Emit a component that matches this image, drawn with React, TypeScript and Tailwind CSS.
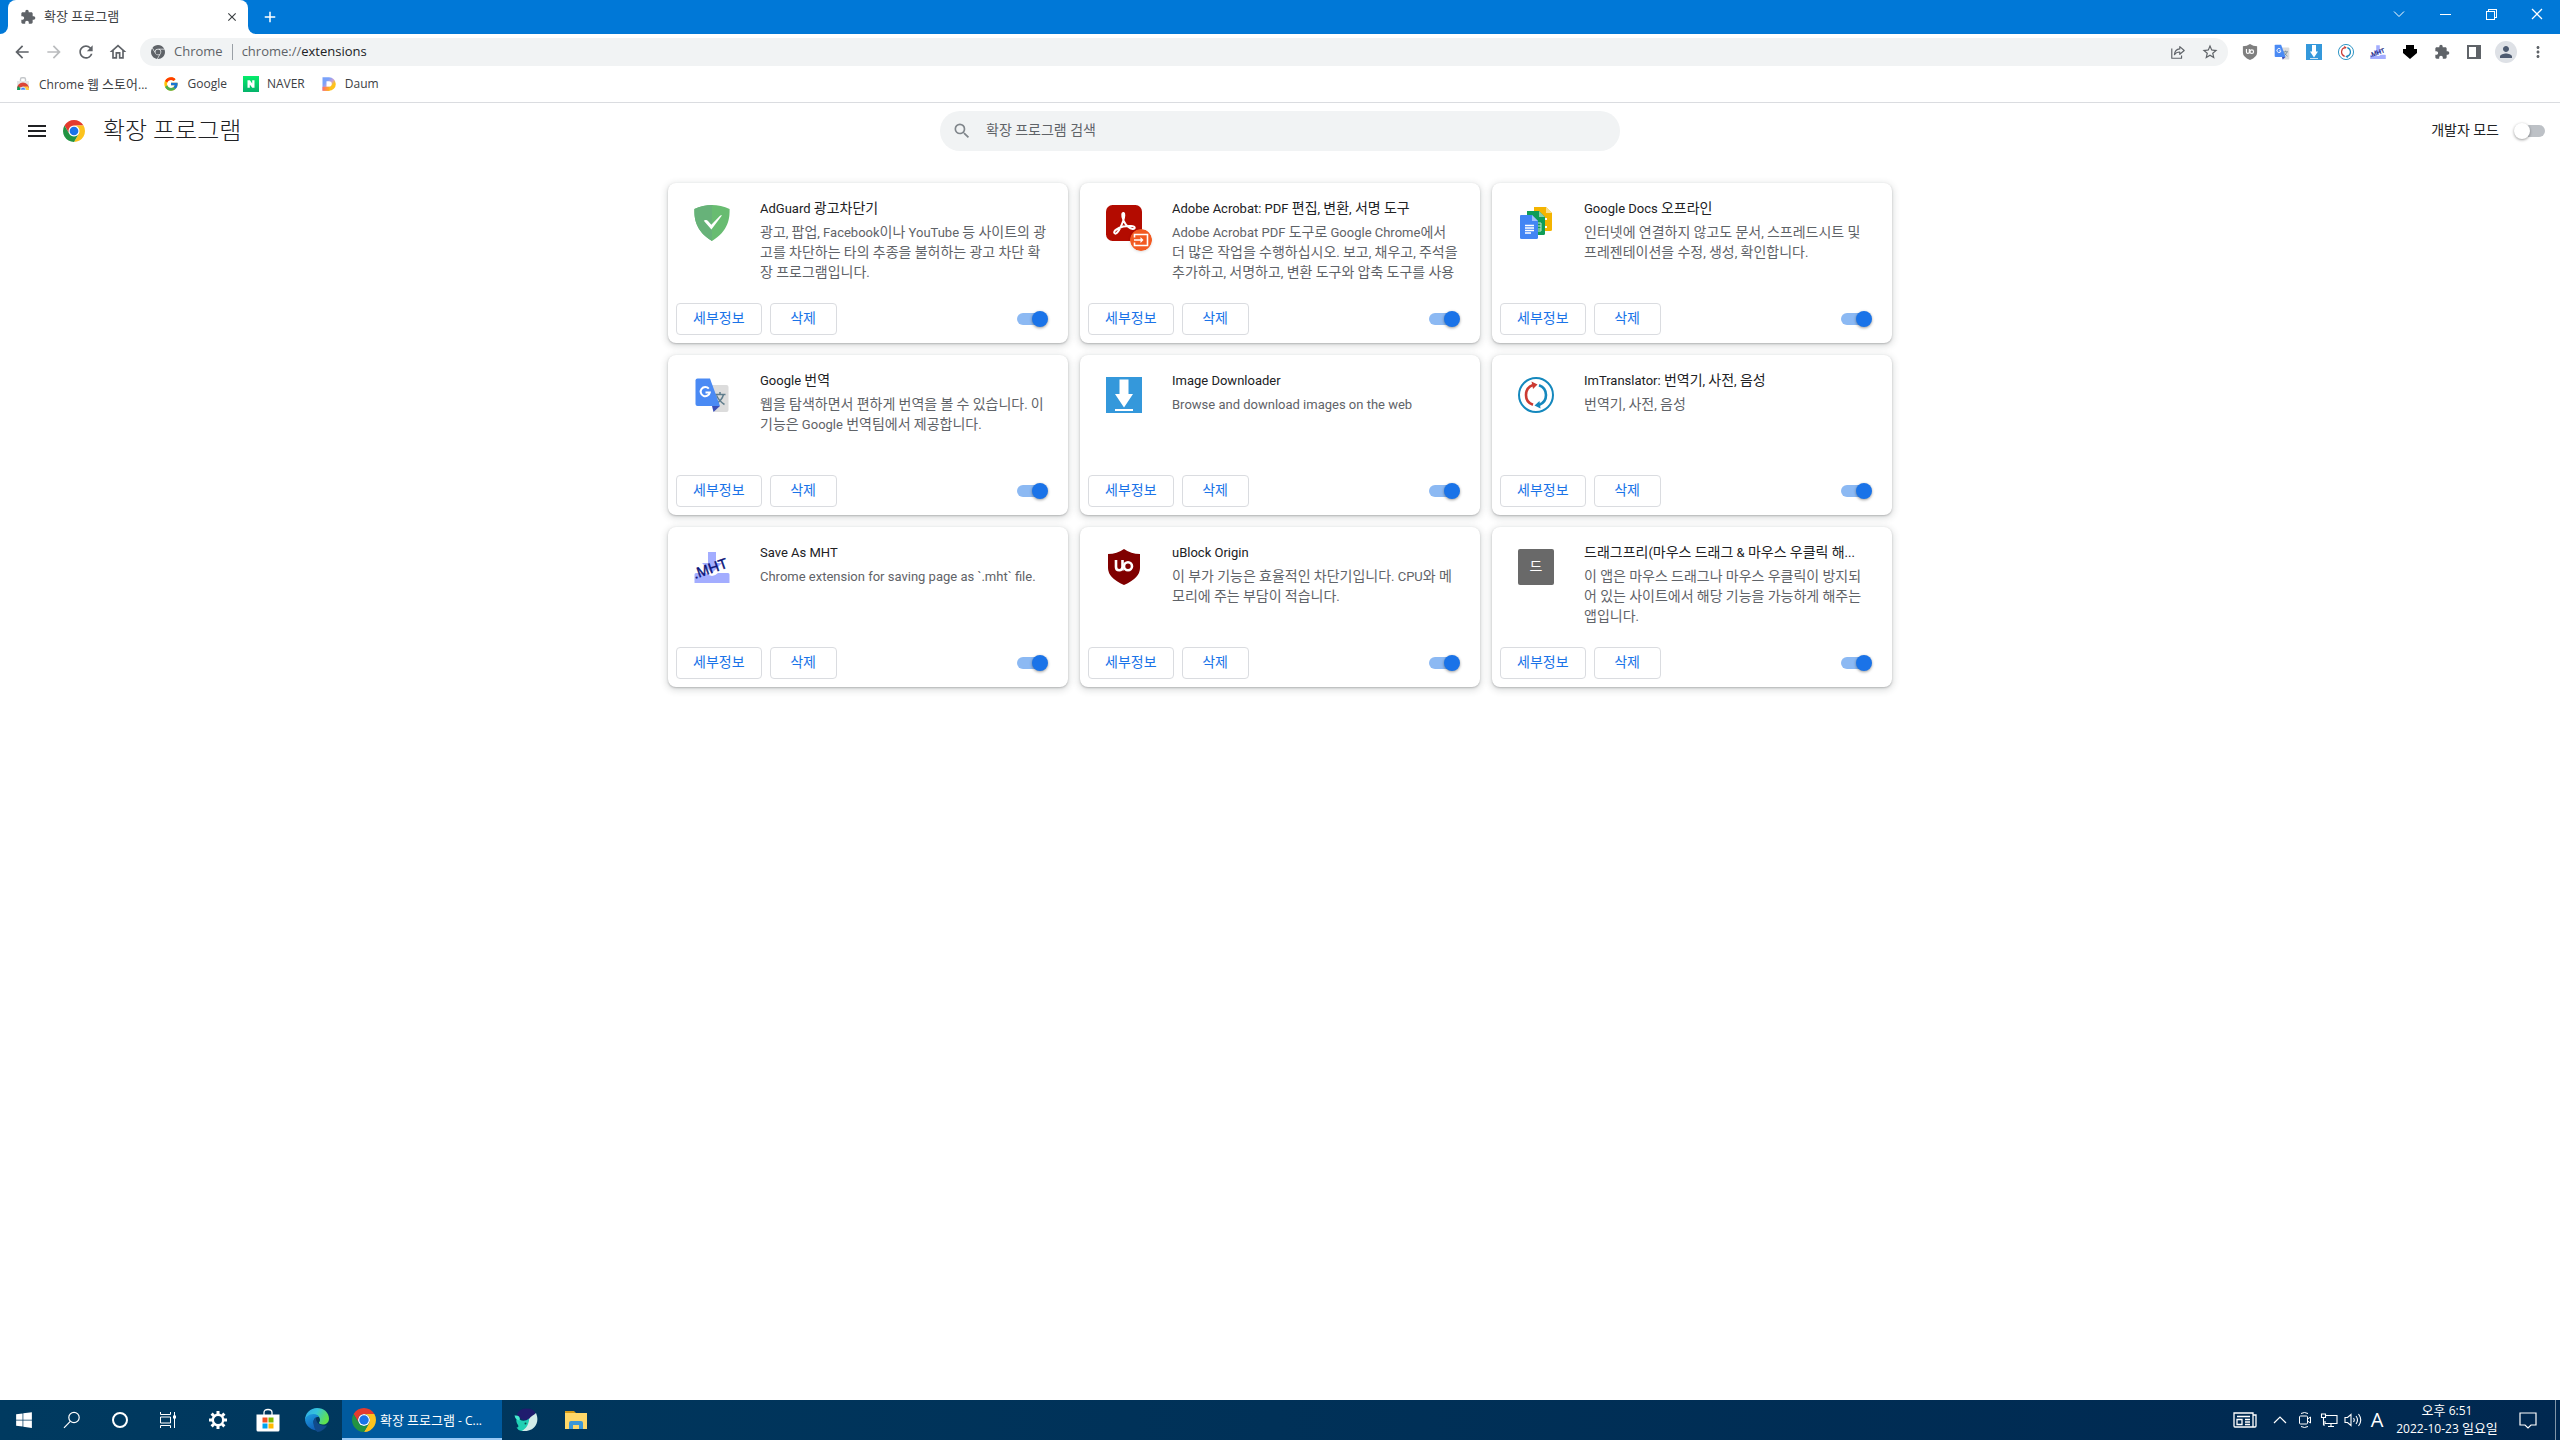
import React from "react";
import { FaWindows } from "react-icons/fa";
import { FcGoogle } from "react-icons/fc";
import {
  MdAdd,
  MdArrowBack,
  MdArrowForward,
  MdClose,
  MdExtension,
  MdMenu,
  MdMoreVert,
  MdOutlineHome,
  MdPerson,
  MdRefresh,
  MdSearch,
  MdStarBorder,
} from "react-icons/md";
import { SiGooglechrome } from "react-icons/si";
import { VscChromeClose, VscChromeMinimize, VscChromeRestore } from "react-icons/vsc";

type IconProps = { className?: string };

// Hangul is set one size up from the Latin text around it
const Mixed: React.FC<{ text: string; hangul?: string }> = ({ text, hangul = "text-[14px]" }) => (
  <>
    {text.split(/([\u3131-\uD79D]+)/).map((part, i) =>
      i % 2 ? (
        <span key={i} className={`leading-4 ${hangul}`}>
          {part}
        </span>
      ) : (
        part
      )
    )}
  </>
);

/* ---------- Logos ---------- */

const ChromeLogo: React.FC<IconProps> = ({ className }) => (
  <svg viewBox="0 0 48 48" className={className}>
    <circle cx="24" cy="24" r="12" fill="#fff" />
    <path d="M24 12H44.78a24 24 0 0 0-41.56 0L13.61 30A12 12 0 0 1 24 12Z" fill="#e33b2e" />
    <path d="M34.39 30 24 48A24 24 0 0 0 44.78 12H24A12 12 0 0 1 34.39 30Z" fill="#fcc31e" />
    <path d="M13.61 30 3.22 12A24 24 0 0 0 24 48L34.39 30a12 12 0 0 1-20.78 0Z" fill="#229342" />
    <circle cx="24" cy="24" r="9.5" fill="#1a73e8" />
  </svg>
);

const WebStoreLogo: React.FC<IconProps> = ({ className }) => (
  <svg viewBox="0 0 16 16" className={className}>
    <path d="M5.5 5V3.2Q5.500 1.800 7 1.800H9Q10.500 1.800 10.500 3.200V5" fill="none" stroke="#c4c7ca" strokeWidth="1.4" />
    <path d="M2 5h12v9H2z" fill="#e4e5e6" />
    <path d="M2 12.500A6 6 0 0 1 14 12.500L8 10.500Z" fill="#db4437" />
    <path d="M2 14a6 6 0 0 1 1.200-4L7 14Z" fill="#0f9d58" />
    <path d="M14 14a6 6 0 0 0-1-3.500H8.500V14Z" fill="#ffcd40" />
    <path d="M5.400 14a2.700 2.700 0 0 1 5.400 0Z" fill="#4285f4" stroke="#fff" strokeWidth=".6" />
  </svg>
);

const NaverLogo: React.FC<IconProps> = ({ className }) => (
  <svg viewBox="0 0 16 16" className={className}>
    <defs>
      <linearGradient id="naver" x1="0" y1="0" x2="0" y2="1">
        <stop offset="0" stopColor="#05ec6a" />
        <stop offset="1" stopColor="#05b36b" />
      </linearGradient>
    </defs>
    <path d="M0 0h16v16H0z" fill="url(#naver)" />
    <path d="M4.500 4.200h2.400l2.300 3.400V4.200h2.300v7.600H9.200L6.800 8.400v3.400H4.500z" fill="#fff" />
  </svg>
);

const DaumLogo: React.FC<IconProps> = ({ className }) => (
  <svg viewBox="0 0 16 16" className={className}>
    <defs>
      <linearGradient id="daum" x1="0" y1="0" x2="1" y2="1">
        <stop offset=".2" stopColor="#7aa2fa" />
        <stop offset=".5" stopColor="#c8a0d8" />
        <stop offset=".75" stopColor="#ffc21a" />
      </linearGradient>
      <linearGradient id="daumFoot" x1="0" y1="0" x2="1" y2="0">
        <stop offset="0" stopColor="#ff6f6f" />
        <stop offset="1" stopColor="#ffb01a" />
      </linearGradient>
    </defs>
    <path d="M3.500 3.200H8a4.800 4.800 0 0 1 0 9.600H3.500z" fill="none" stroke="url(#daum)" strokeWidth="4" />
    <path d="M1.500 10.800H8.500v4H1.500z" fill="url(#daumFoot)" />
  </svg>
);

/* ---------- Extension icons ---------- */

const AdGuardIcon: React.FC<IconProps> = ({ className }) => (
  <svg viewBox="0 0 36 36" className={className}>
    <path d="M18 0C12.500 0 5.800 1.300.4 4.100c0 6-.7 21 17.600 31.900C36.300 25.100 35.600 10.100 35.600 4.100 30.200 1.300 23.500 0 18 0Z" fill="#68bc71" />
    <path d="M18 0C12.500 0 5.800 1.300.4 4.100c0 6-.7 21 17.600 31.900Z" fill="#67b279" />
    <path d="M17.400 24.500 27.900 10.600c-.8-.6-1.500-.2-1.900.2L17.300 19.800l-3.300-3.900c-1.600-1.800-3.700-.4-4.200-.1Z" fill="#fff" />
  </svg>
);

const AcrobatIcon: React.FC<IconProps> = ({ className }) => (
  <svg viewBox="0 0 36 36" className={className}>
    <rect width="36" height="36" rx="6.500" fill="#b30b00" />
    <path
      d="M8.500 28.200c-1.700-2.100 3.300-5.400 8.800-6.600 5.400-1.300 11.200-.7 11.400 1.100.2 1.900-3.400 1.700-6.600-.9-3.600-3-6.300-8.700-5.800-12.300.3-2.400 2.200-2 2 .7-.3 5.500-6.800 21.300-9.800 18Z"
      fill="none"
      stroke="#fff"
      strokeWidth="2"
      strokeLinejoin="round"
    />
  </svg>
);

const AcrobatBadge: React.FC<IconProps> = ({ className }) => (
  <svg viewBox="0 0 22 22" className={className}>
    <circle cx="11" cy="11" r="11" fill="#f25a22" />
    <path d="M4.500 8.500V5.500h13v11h-13v-3" fill="none" stroke="#fff" strokeWidth="1.600" />
    <path d="M4 11h8" stroke="#fff" strokeWidth="1.600" />
    <path d="M10.500 8 13.500 11 10.500 14z" fill="#fff" />
  </svg>
);

const DocsIcon: React.FC<IconProps> = ({ className }) => (
  <svg viewBox="0 0 36 36" className={className}>
    <path d="M16 2h12l6 6v16.500q0 1.500-1.500 1.500H17.500Q16 26 16 24.500z" fill="#f4b400" />
    <path d="M28 2l6 6h-6z" fill="#fade8b" />
    <path d="M26 13h3v2h-3zM26 21h3v2h-3z" fill="#fff" />
    <path d="M9 6h12l6 6v16.500q0 1.500-1.500 1.500H10.500Q9 30 9 28.500z" fill="#0f9d58" />
    <path d="M21 6l6 6h-6z" fill="#87ceac" />
    <path d="M19 18h4v8h-4M19 21h4M19 24h4" fill="none" stroke="#bfe5d1" />
    <path d="M2 11q0-1 1-1h11l6 6v16.500q0 1.500-1.500 1.500h-15Q2 34 2 32.500z" fill="#4285f4" />
    <path d="M14 10l6 6h-6z" fill="#a1c2fa" />
    <path d="M7 20.500h9M7 23h9M7 25.500h9M7 28h6" stroke="#fff" strokeWidth="1.300" />
  </svg>
);

const TranslateIcon: React.FC<IconProps> = ({ className }) => (
  <svg viewBox="0 0 36 36" className={className}>
    <path d="M15 8h17.500Q34.500 8 34.500 10v23q0 2-2 2H20z" fill="#dcdcdc" />
    <path d="M20.500 17.500h11M26 15v2.500M29.500 17.500q-1.500 6-8 9.500M22.500 18.500q3 6 8 9" fill="none" stroke="#5f7d8c" strokeWidth="1.500" />
    <path d="M18 29h8l-6.500 6z" fill="#3a4fb8" />
    <path d="M3.500 1.500h12.500L26 29H3.500q-2 0-2-2V3.500q0-2 2-2z" fill="#4a8af4" />
    <path
      d="M14.800 11.700A4.600 4.600 0 1 0 15.800 15.500H11.500"
      fill="none"
      stroke="#fff"
      strokeWidth="2"
    />
  </svg>
);

const DownloaderIcon: React.FC<IconProps> = ({ className }) => (
  <svg viewBox="0 0 36 36" className={className}>
    <path d="M0 0h36v36H0z" fill="#3498db" />
    <path d="M13.500 2.500h9V17H27L18 30.500 9 17h4.500zM9 32h18v2H9z" fill="#fff" />
  </svg>
);

const ImTranslatorIcon: React.FC<IconProps> = ({ className }) => (
  <svg viewBox="0 0 36 36" className={className}>
    <circle cx="18" cy="18" r="17" fill="#fff" stroke="#1588bd" strokeWidth="2" />
    <path d="M15 27.800A10.500 10.500 0 0 1 15 8" fill="none" stroke="#cb3a32" strokeWidth="2.600" />
    <path d="M13.500 4.500 19.500 7.500 15 12z" fill="#cb3a32" />
    <path d="M21 8.200A10.500 10.500 0 0 1 21 28" fill="none" stroke="#1588bd" strokeWidth="2.600" />
    <path d="M22.500 31.500 16.500 28.500 21.500 24z" fill="#1588bd" />
  </svg>
);

const MhtIcon: React.FC<IconProps> = ({ className = "" }) => (
  <svg viewBox="0 0 36 36" className={`overflow-visible ${className}`}>
    <path d="M14 3h8v11h6L18 24 8 14h6z" fill="#a3adff" />
    <path d="M2 24h10q6 6 12 0h10q1.500 0 1.500 1.500V34H.5v-8.500Q.5 24 2 24z" fill="#a3adff" />
    <text x="1" y="30" transform="rotate(-19 1 30)" fontFamily="Liberation Sans" fontSize="14.500" fill="#0a1478" stroke="#0a1478" strokeWidth=".4">
      .MHT
    </text>
  </svg>
);

const UBlockIcon: React.FC<IconProps & { color?: string }> = ({ className, color = "#800000" }) => (
  <svg viewBox="0 0 36 36" className={className}>
    <path d="M18 0q7 5 16 5v14q0 10-16 17Q2 29 2 19V5q9 0 16-5z" fill={color} />
    <path d="M10 11v7q0 3.200 3.200 3.200T16.500 18V11M16.500 11v10.500" fill="none" stroke="#fff" strokeWidth="2.600" />
    <circle cx="22" cy="17.200" r="4" fill="none" stroke="#fff" strokeWidth="2.600" />
  </svg>
);

const DragFreeIcon: React.FC<IconProps> = ({ className }) => (
  <svg viewBox="0 0 36 36" className={className}>
    <rect width="36" height="36" rx="2" fill="#696969" />
    <text x="18" y="22" textAnchor="middle" fontFamily="Noto Sans CJK KR" fontSize="14" fill="#fff">
      드
    </text>
  </svg>
);

const BlackArrowIcon: React.FC<IconProps> = ({ className }) => (
  <svg viewBox="0 0 16 16" className={className}>
    <path d="M4 1h8v4h3v4l-7 6-7-6V5h3z" fill="#000" />
  </svg>
);

const PanelIcon: React.FC<IconProps> = ({ className }) => (
  <svg viewBox="0 0 16 16" className={className}>
    <path d="M1 1h14v14H1zM3 3v10h7V3z" fill="#5f6368" fillRule="evenodd" />
  </svg>
);

const ShareIcon: React.FC<IconProps> = ({ className }) => (
  <svg viewBox="0 0 18 18" className={className} fill="none" stroke="#5f6368" strokeWidth="1.300" strokeLinejoin="round">
    <path d="M2 5v11h11v-3" />
    <path d="M5 12q.5-6 6-6.500V3l5 4.300-5 4.300V9Q7 9 5 12z" />
  </svg>
);

/* ---------- Data ---------- */

const extensions = [
  {
    name: "AdGuard 광고차단기",
    description: "광고, 팝업, Facebook이나 YouTube 등 사이트의 광고를 차단하는 타의 추종을 불허하는 광고 차단 확장 프로그램입니다.",
    icon: AdGuardIcon,
  },
  {
    name: "Adobe Acrobat: PDF 편집, 변환, 서명 도구",
    description: "Adobe Acrobat PDF 도구로 Google Chrome에서 더 많은 작업을 수행하십시오. 보고, 채우고, 주석을 추가하고, 서명하고, 변환 도구와 압축 도구를 사용",
    icon: AcrobatIcon,
    badge: true,
  },
  {
    name: "Google Docs 오프라인",
    description: "인터넷에 연결하지 않고도 문서, 스프레드시트 및 프레젠테이션을 수정, 생성, 확인합니다.",
    icon: DocsIcon,
  },
  {
    name: "Google 번역",
    description: "웹을 탐색하면서 편하게 번역을 볼 수 있습니다. 이 기능은 Google 번역팀에서 제공합니다.",
    icon: TranslateIcon,
  },
  { name: "Image Downloader", description: "Browse and download images on the web", icon: DownloaderIcon },
  { name: "ImTranslator: 번역기, 사전, 음성", description: "번역기, 사전, 음성", icon: ImTranslatorIcon },
  { name: "Save As MHT", description: "Chrome extension for saving page as `.mht` file.", icon: MhtIcon },
  {
    name: "uBlock Origin",
    description: "이 부가 기능은 효율적인 차단기입니다. CPU와 메모리에 주는 부담이 적습니다.",
    icon: UBlockIcon,
  },
  {
    name: "드래그프리(마우스 드래그 & 마우스 우클릭 해...",
    description: "이 앱은 마우스 드래그나 마우스 우클릭이 방지되어 있는 사이트에서 해당 기능을 가능하게 해주는 앱입니다.",
    icon: DragFreeIcon,
  },
];

const bookmarks = [
  { label: "Chrome 웹 스토어...", icon: WebStoreLogo },
  { label: "Google", icon: FcGoogle },
  { label: "NAVER", icon: NaverLogo },
  { label: "Daum", icon: DaumLogo },
];

/* ---------- Browser frame ---------- */

const TabStrip = () => (
  <div className="flex h-[34px] items-stretch bg-[#0078d7] text-white">
    <div className="w-2 bg-white">
      <div className="h-full rounded-br-lg bg-[#0078d7]" />
    </div>
    <div className="flex w-60 items-center rounded-t-lg bg-white pl-3 pr-2 text-xs text-[#3c4043]">
      <MdExtension className="h-4 w-4 text-[#5f6368]" />
      <span className="ml-2 flex-1 pb-0.5 text-[13px] leading-4">확장 프로그램</span>
      <button aria-label="탭 닫기" className="flex h-4 w-4 items-center justify-center">
        <MdClose className="h-3.5 w-3.5" />
      </button>
    </div>
    <div className="w-2 bg-white">
      <div className="h-full rounded-bl-lg bg-[#0078d7]" />
    </div>
    <button aria-label="새 탭" className="flex w-7 items-center justify-center">
      <MdAdd className="h-[18px] w-[18px]" />
    </button>
    <div className="flex-1" />
    <div className="flex h-7">
      <button aria-label="탭 검색" className="flex w-[46px] items-center justify-center">
        <svg viewBox="0 0 12 12" className="h-3 w-3" fill="none" stroke="currentColor">
          <path d="M1 3.500 6 8.500 11 3.500" />
        </svg>
      </button>
      <button aria-label="최소화" className="flex w-[46px] items-center justify-center">
        <VscChromeMinimize className="h-4 w-4" />
      </button>
      <button aria-label="이전 크기로 복원" className="flex w-[46px] items-center justify-center">
        <VscChromeRestore className="h-4 w-4" />
      </button>
      <button aria-label="닫기" className="flex w-[46px] items-center justify-center">
        <VscChromeClose className="h-4 w-4" />
      </button>
    </div>
  </div>
);

const ToolButton: React.FC<{ label: string; children: React.ReactNode }> = ({ label, children }) => (
  <button aria-label={label} className="flex h-8 w-8 items-center justify-center">
    {children}
  </button>
);

const Toolbar = () => (
  <div className="flex h-9 items-center pl-1.5 pr-1.5 text-[#5f6368]">
    <ToolButton label="뒤로">
      <MdArrowBack className="h-5 w-5" />
    </ToolButton>
    <ToolButton label="앞으로">
      <MdArrowForward className="h-5 w-5 text-[#babcbe]" />
    </ToolButton>
    <ToolButton label="새로고침">
      <MdRefresh className="h-5 w-5" />
    </ToolButton>
    <ToolButton label="홈">
      <MdOutlineHome className="h-5 w-5" />
    </ToolButton>
    <div className="ml-1.5 flex h-7 flex-1 items-center rounded-full bg-[#f1f3f4] pl-[11px] pr-0.5 text-[13px]">
      <SiGooglechrome className="h-3.5 w-3.5" />
      <span className="ml-[9px]">Chrome</span>
      <span className="mx-[9px] h-4 w-px bg-[#9aa0a6]" />
      <span className="flex-1">
        chrome://<span className="text-[#202124]">extensions</span>
      </span>
      <ToolButton label="공유">
        <ShareIcon className="h-4 w-4" />
      </ToolButton>
      <ToolButton label="북마크에 추가">
        <MdStarBorder className="h-[18px] w-[18px]" />
      </ToolButton>
    </div>
    <div className="ml-1.5 flex">
      <ToolButton label="uBlock Origin">
        <UBlockIcon className="h-4 w-4" color="#7f7f7f" />
      </ToolButton>
      <ToolButton label="Google 번역">
        <TranslateIcon className="h-4 w-4" />
      </ToolButton>
      <ToolButton label="Image Downloader">
        <DownloaderIcon className="h-4 w-4" />
      </ToolButton>
      <ToolButton label="ImTranslator">
        <ImTranslatorIcon className="h-4 w-4" />
      </ToolButton>
      <ToolButton label="Save As MHT">
        <MhtIcon className="h-4 w-4" />
      </ToolButton>
      <ToolButton label="다운로드">
        <BlackArrowIcon className="h-4 w-4" />
      </ToolButton>
      <ToolButton label="확장 프로그램">
        <MdExtension className="h-4 w-4" />
      </ToolButton>
      <ToolButton label="측면 패널">
        <PanelIcon className="h-4 w-4" />
      </ToolButton>
      <ToolButton label="프로필">
        <span className="flex h-[22px] w-[22px] items-center justify-center rounded-full bg-[#dee1e6]">
          <MdPerson className="h-[18px] w-[18px] text-[#4d5a70]" />
        </span>
      </ToolButton>
      <ToolButton label="메뉴">
        <MdMoreVert className="h-[18px] w-[18px]" />
      </ToolButton>
    </div>
  </div>
);

const BookmarkBar = () => (
  <nav className="flex h-[33px] items-center gap-4 border-b border-[#dadce0] pb-1 pl-[15px] text-xs text-[#3c4043]">
    {bookmarks.map(({ label, icon: Icon }) => (
      <a key={label} href="#" className="flex items-center gap-2">
        <Icon className="h-4 w-4" />
        <span>
          <Mixed text={label} hangul="text-[13px]" />
        </span>
      </a>
    ))}
  </nav>
);

/* ---------- Extensions page ---------- */

const Toggle: React.FC<{ label?: string; id?: string; on?: boolean }> = ({ label, id, on = false }) => (
  <input
    id={id}
    type="checkbox"
    aria-label={label}
    defaultChecked={on}
    className="relative h-3 w-7 appearance-none rounded-full bg-[#bdc1c6] before:absolute before:-left-[3px] before:-top-0.5 before:h-4 before:w-4 before:rounded-full before:bg-white before:shadow-[0_1px_3px_rgba(0,0,0,0.4)] checked:bg-[#8cb9f3] checked:before:left-[15px] checked:before:bg-[#1a73e8]"
  />
);

const PageHeader = () => (
  <header className="grid h-14 grid-cols-[1fr_680px_1fr] items-center font-[Roboto,'Noto_Sans_CJK_KR',sans-serif] text-[#202124]">
    <div className="flex items-center pl-[25px]">
      <button aria-label="기본 메뉴">
        <MdMenu className="h-6 w-6" />
      </button>
      <ChromeLogo className="ml-3.5 h-[22px] w-[22px]" />
      <h1 className="ml-[18px] text-2xl font-light">확장 프로그램</h1>
    </div>
    <label className="flex h-10 items-center rounded-full bg-[#f1f3f4] pl-3">
      <MdSearch className="h-5 w-5 text-[#80868b]" />
      <input
        type="search"
        aria-label="확장 프로그램 검색"
        placeholder="확장 프로그램 검색"
        className="ml-3.5 flex-1 bg-transparent pb-0.5 text-[14px] leading-5 outline-none placeholder:text-[#5f6368]"
      />
    </label>
    <div className="flex items-center justify-end pr-[15px]">
      <label htmlFor="dev-mode" className="mr-[18px] pb-0.5 text-[14px] leading-5">
        개발자 모드
      </label>
      <Toggle id="dev-mode" />
    </div>
  </header>
);

const ExtensionCard: React.FC<(typeof extensions)[number]> = ({ name, description, icon: Icon, badge }) => (
  <article className="flex h-40 flex-col rounded-lg bg-white shadow-[0_1px_2px_rgba(60,64,67,0.3),0_2px_6px_2px_rgba(60,64,67,0.15)]">
    <div className="flex flex-1 pl-[26px] pr-5 pt-4">
      <div className="relative mt-1.5 h-9 w-9 shrink-0">
        <Icon className="h-9 w-9" />
        {badge && <AcrobatBadge className="absolute -bottom-2.5 -right-2.5 h-[22px] w-[22px] rounded-full shadow" />}
      </div>
      <div className="ml-[30px] min-w-0 flex-1 text-[13px] leading-5">
        <h2 className="h-5 whitespace-nowrap text-[#202124]">
          <Mixed text={name} />
        </h2>
        <p className="mt-1 line-clamp-3 text-[#5f6368]">
          <Mixed text={description} />
        </p>
      </div>
    </div>
    <div className="flex items-center gap-2 pb-2 pl-2 pr-[23px] text-[14px] leading-5 text-[#1a73e8]">
      <button className="h-8 rounded border border-[#dadce0] px-4 pb-0.5">세부정보</button>
      <button className="h-8 min-w-[67px] rounded border border-[#dadce0] px-4 pb-0.5">삭제</button>
      <div className="flex flex-1 justify-end">
        <Toggle label={name} on />
      </div>
    </div>
  </article>
);

/* ---------- Taskbar ---------- */

const Taskbar = () => (
  <footer className="flex h-10 items-stretch bg-linear-to-r from-[#003a60] to-[#002850] text-xs text-white">
    <button aria-label="시작" className="flex w-12 items-center justify-center">
      <FaWindows className="h-[18px] w-[18px]" />
    </button>
    <button aria-label="검색" className="flex w-12 items-center justify-center">
      <svg viewBox="0 0 18 18" className="h-[18px] w-[18px]" fill="none" stroke="currentColor" strokeWidth="1.200">
        <circle cx="11" cy="6.500" r="5.200" />
        <path d="M7.300 10.300 1 16.800" />
      </svg>
    </button>
    <button aria-label="Cortana" className="flex w-12 items-center justify-center">
      <span className="h-4 w-4 rounded-full border-2 border-white" />
    </button>
    <button aria-label="작업 보기" className="flex w-12 items-center justify-center">
      <svg viewBox="0 0 18 18" className="h-[18px] w-[18px]" fill="none" stroke="currentColor">
        <path d="M1.500 1v2.500h10V1M1.500 17v-2.500h10V17M1.500 6h10v6h-10zM15.500 1v16" />
        <path d="M14 4.500h3v3h-3z" fill="currentColor" stroke="none" />
      </svg>
    </button>
    <button aria-label="설정" className="flex w-[52px] items-center justify-center">
      <svg viewBox="0 0 18 18" className="h-[18px] w-[18px]" fill="none" stroke="currentColor">
        <circle cx="9" cy="9" r="5.200" strokeWidth="2.400" />
        <path d="M9 0v3.500M9 14.500V18M0 9h3.500M14.500 9H18M2.600 2.600 5 5M13 13l2.400 2.400M2.600 15.400 5 13M13 5l2.400-2.400" strokeWidth="3" />
      </svg>
    </button>
    <button aria-label="Microsoft Store" className="flex w-12 items-center justify-center">
      <svg viewBox="0 0 24 24" className="h-6 w-6">
        <path d="M8 7V4.500Q8 1.500 12 1.500T16 4.500V7" fill="none" stroke="#fff" strokeWidth="1.300" />
        <path d="M.5 6.500h23V22q0 1.500-1.500 1.500H2Q.5 23.500.5 22z" fill="#fff" />
        <path d="M6.500 9.500h5v5h-5z" fill="#f25022" />
        <path d="M12.500 9.500h5v5h-5z" fill="#7fba00" />
        <path d="M6.500 15.500h5v5h-5z" fill="#00a4ef" />
        <path d="M12.500 15.500h5v5h-5z" fill="#ffb900" />
      </svg>
    </button>
    <button aria-label="Microsoft Edge" className="flex w-[50px] items-center justify-center">
      <svg viewBox="0 0 24 24" className="h-6 w-6">
        <defs>
          <linearGradient id="edgeTop" x1="0" y1="0" x2="1" y2=".4">
            <stop offset="0" stopColor="#2fa8e8" />
            <stop offset=".5" stopColor="#35c4dc" />
            <stop offset="1" stopColor="#5fe24e" />
          </linearGradient>
          <linearGradient id="edgeSide" x1="0" y1="0" x2=".6" y2="1">
            <stop offset="0" stopColor="#1da1e2" />
            <stop offset="1" stopColor="#1059b5" />
          </linearGradient>
        </defs>
        <path d="M0 12A12 12 0 0 1 12 0c7 0 12 4.800 12 10.500 0 4-3 6-6 6-2.500 0-4-.8-4-1.700 0-.6 1-1.200 1-3C15 9 12.500 7 9 7c-4 0-8 2-9 5z" fill="url(#edgeTop)" />
        <path d="M0 12c.5-3 4-6 8.500-6 3 0 5 1.500 6 3.200C11 8 8.500 11 8.500 14c0 5 5 8 9 7A12 12 0 0 1 0 12z" fill="url(#edgeSide)" />
        <path d="M8.500 14c0-2 1-3.800 2.500-4.800-.5 5 3.500 9.300 11 8.300-2 3.500-6 6.500-9.500 6.500C9.500 22 8.500 18 8.500 14z" fill="#114a8b" />
      </svg>
    </button>
    <button className="flex w-40 items-center border-b-2 border-[#99c9f5] bg-[#005a9e] pl-2.5 pt-0.5">
      <ChromeLogo className="h-6 w-6" />
      <span className="ml-1">
        <Mixed text="확장 프로그램 - C..." hangul="text-[13px]" />
      </span>
    </button>
    <button aria-label="Whale" className="flex w-12 items-center justify-center">
      <svg viewBox="0 0 24 24" className="h-6 w-6">
        <path d="M3 7Q4 1 12 .5q8 0 9.500 5L14 12Q7 13 3 7z" fill="#201c6e" />
        <path d="M22 5c2.500 6 1.500 11-2 14.500-3 3-8 4-12.500 3.500C12 19 14 15 15 11c1.500-3 5-3.500 7-6z" fill="#d3ece9" />
        <path d="M15 10.500C15 16 12.500 20.500 7.500 23q-3.500-.5-5-3.500C4 20 5 18.500 4 17c-1.500-2-2-4-1.500-6Q4 10.500 5.500 11.500C9 13.500 12 13 15 10.500z" fill="#1fd0b4" />
        <path d="M.5 7.500q3-.5 4.500 1t.5 4Q1.500 12 .5 7.500z" fill="#45ecd0" />
        <circle cx="11.500" cy="15.500" r="1" fill="#0b5550" />
      </svg>
    </button>
    <button aria-label="파일 탐색기" className="flex w-[52px] items-center justify-center">
      <svg viewBox="0 0 22 20" className="h-5 w-[22px]">
        <path d="M0 1h9l2 2H0z" fill="#d69a16" />
        <path d="M0 3h22v16H0z" fill="#ffd768" />
        <path d="M4 19v-6q0-2 2-2h10q2 0 2 2v6h-4v-4H8v4z" fill="#3c97d8" />
      </svg>
    </button>

    <div className="flex-1" />

    <button aria-label="뉴스" className="flex w-11 items-center justify-center">
      <svg viewBox="0 0 24 16" className="h-4 w-6" fill="none" stroke="currentColor" strokeWidth="1.300">
        <path d="M1 1h19v14H2q-1 0-1-1zM20 3h3v11q0 1-1 1h-2" />
        <path d="M4 4.500h13M12 7.500h5M12 10h5M12 12.500h5M4 7.500h5v5H4z" />
      </svg>
    </button>
    <button aria-label="숨겨진 아이콘 표시" className="flex w-[26px] items-center justify-center">
      <svg viewBox="0 0 14 14" className="h-3.5 w-3.5" fill="none" stroke="currentColor" strokeWidth="1.200">
        <path d="M1 10 7 4 13 10" />
      </svg>
    </button>
    <button aria-label="모임 시작" className="flex w-6 items-center justify-center">
      <svg viewBox="0 0 14 18" className="h-[18px] w-3.5" fill="none" stroke="currentColor">
        <path d="M2.500 5h6q1 0 1 1v6q0 1-1 1h-6q-1 0-1-1V6q0-1 1-1zM9.500 8 12.500 6v6L9.500 10M3 2.500Q6.500.5 10 2.500M3 15.500q3.500 2 7 0" />
      </svg>
    </button>
    <button aria-label="네트워크" className="flex w-6 items-center justify-center">
      <svg viewBox="0 0 18 16" className="h-4 w-[18px]" fill="none" stroke="currentColor" strokeWidth="1.100">
        <path d="M6 3.500h11v8H5V9M8 14.500h6M11 11.500v3M1.500 2h4v3.500h-4zM3.500 5.500v7.500H5" />
      </svg>
    </button>
    <button aria-label="볼륨" className="flex w-6 items-center justify-center">
      <svg viewBox="0 0 18 16" className="h-4 w-[18px]" fill="none" stroke="currentColor" strokeWidth="1.100">
        <path d="M1 5.500h2.500L7 2.500v11L3.500 10.500H1zM9.500 6q1.500 2 0 4M12 4q3 4 0 8M14.500 2q4.500 6 0 12" />
      </svg>
    </button>
    <button className="w-6 text-xl leading-10">A</button>
    <button className="ml-1 flex w-[108px] flex-col items-center justify-center leading-[18px]">
      <span>
        <Mixed text="오후 6:51" hangul="text-[13px]" />
      </span>
      <span>
        <Mixed text="2022-10-23 일요일" hangul="text-[13px]" />
      </span>
    </button>
    <button aria-label="알림" className="flex w-[54px] items-center justify-center">
      <svg viewBox="0 0 18 18" className="h-[18px] w-[18px]" fill="none" stroke="currentColor" strokeWidth="1.200">
        <path d="M1 2h16v12h-5l-3 3-3-3H1z" />
      </svg>
    </button>
    <div className="w-[5px] border-l border-[#8095a8]" />
  </footer>
);

export default function App() {
  return (
    <div className="flex min-h-screen flex-col bg-white font-['Open_Sans','Noto_Sans_CJK_KR',sans-serif]">
      <TabStrip />
      <Toolbar />
      <BookmarkBar />
      <PageHeader />
      <main className="flex-1 px-6 py-6 font-[Roboto,'Noto_Sans_CJK_KR',sans-serif]">
        <div className="mx-auto grid max-w-[1224px] grid-cols-3 gap-3">
          {extensions.map((extension) => (
            <ExtensionCard key={extension.name} {...extension} />
          ))}
        </div>
      </main>
      <Taskbar />
    </div>
  );
}
